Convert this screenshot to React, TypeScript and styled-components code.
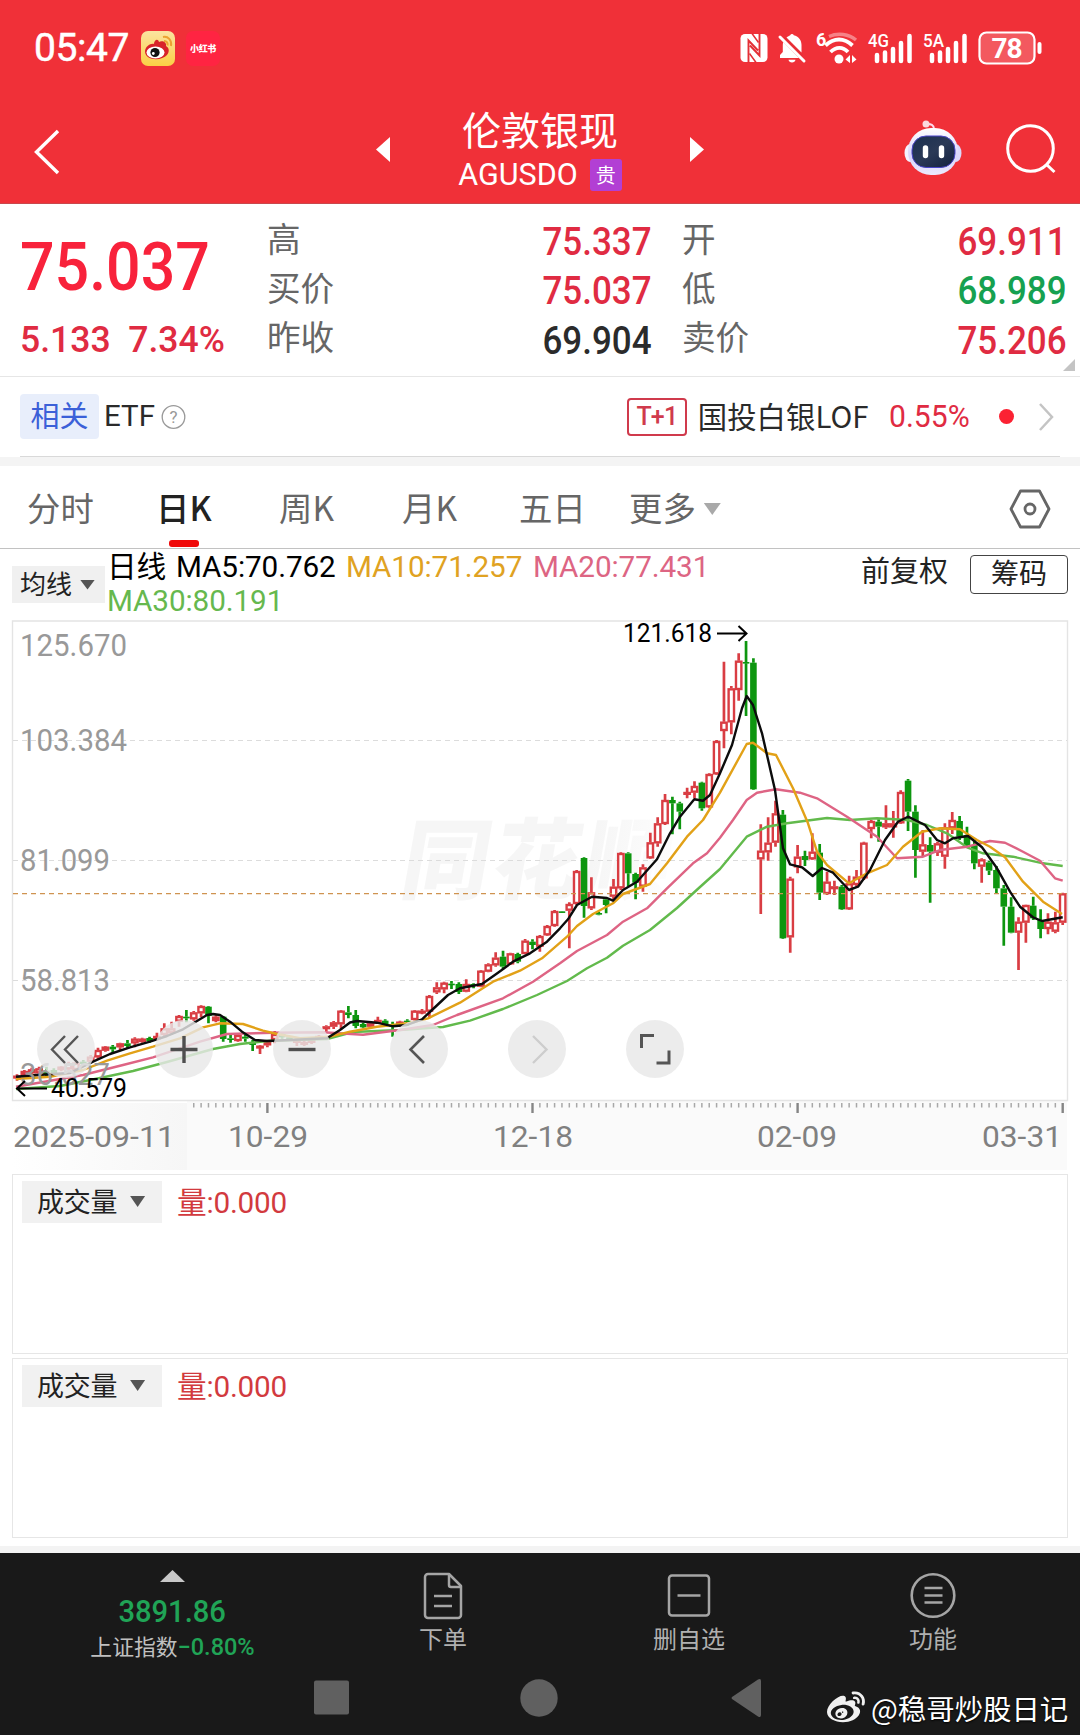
import React from "react";
import styled, { createGlobalStyle } from "styled-components";
import { FaWeibo } from "react-icons/fa";

const NUM = `Roboto, "Noto Sans CJK SC", sans-serif`;
const CJK = `"Noto Sans CJK SC", Roboto, sans-serif`;

const GlobalStyle = createGlobalStyle`
  * { box-sizing: border-box; }
  html, body { margin: 0; padding: 0; background: #fff; }
  body { font-family: ${CJK}; }
  svg { display: block; flex: none; overflow: visible; }
`;

const Screen = styled.main`
  width: 1080px;
  height: 1735px;
  overflow: hidden;
  display: flex;
  flex-direction: column;
  background: #fff;
`;

/* shared text */
const Num = styled.span<{
  $size: number;
  $color?: string;
  $weight?: number;
  $sx?: number;
  $origin?: string;
}>`
  display: inline-block;
  font-family: ${NUM};
  font-size: ${(p) => p.$size}px;
  font-weight: ${(p) => p.$weight ?? 400};
  color: ${(p) => p.$color ?? "inherit"};
  line-height: 1;
  white-space: nowrap;
  transform: scaleX(${(p) => p.$sx ?? 1});
  transform-origin: ${(p) => p.$origin ?? "left"} center;
`;

const Triangle = styled.i<{ $dir: "up" | "down"; $w: number; $h: number; $color: string }>`
  flex: none;
  width: ${(p) => p.$w}px;
  height: ${(p) => p.$h}px;
  background: ${(p) => p.$color};
  clip-path: ${(p) =>
    p.$dir === "up" ? "polygon(50% 0, 100% 100%, 0 100%)" : "polygon(0 0, 100% 0, 50% 100%)"};
`;

/* header */
const Header = styled.header`
  height: 204px;
  flex: none;
  background: #f03038;
  border-bottom: 1px solid #c9474c;
  color: #fff;
`;

const StatusBar = styled.div`
  height: 96px;
  padding: 0 38px 0 34px;
  display: flex;
  align-items: center;
  justify-content: space-between;
`;

const StatusGroup = styled.div<{ $gap?: number }>`
  display: flex;
  align-items: center;
  gap: ${(p) => p.$gap ?? 0}px;
`;

const Clock = styled.div`
  width: 107px;
  font: 400 39px/1 ${NUM};
  letter-spacing: -0.4px;
  -webkit-text-stroke: 0.5px #fff;
`;

const WeiboApp = styled.div`
  width: 34px;
  height: 35px;
  border-radius: 7px;
  background: linear-gradient(#fbe3a0, #fbd045);
`;

const RedApp = styled.div`
  width: 34px;
  height: 35px;
  margin-left: 11px;
  border-radius: 7px;
  background: #ff2442;
  display: flex;
  align-items: center;
  justify-content: center;
  font: 900 9px/1 ${CJK};
  letter-spacing: -0.4px;
`;

const NavBar = styled.div`
  height: 107px;
  padding-left: 34px;
  display: flex;
  align-items: flex-start;
`;

const NavSlot = styled.div<{ $w: number; $top: number }>`
  width: ${(p) => p.$w}px;
  padding-top: ${(p) => p.$top}px;
  flex: none;
`;

const TitleBlock = styled.div`
  width: 300px;
  display: flex;
  flex-direction: column;
  align-items: center;
`;

const Title = styled.h1`
  margin: 10px 0 0;
  font: 400 39px/44px ${CJK};
`;

const Code = styled.div`
  height: 34px;
  margin-top: 8px;
  display: flex;
  align-items: center;
  gap: 12px;
  font: 400 30.5px/34px ${NUM};
`;

const Badge = styled.span`
  width: 32px;
  height: 32px;
  border-radius: 3px;
  background: #b23fd4;
  font: 400 20px/31px ${CJK};
  text-align: center;
`;

/* quote */
const Quote = styled.section`
  height: 173px;
  flex: none;
  position: relative;
  display: grid;
  grid-template-columns: 247px 385px 30px 385px;
  padding: 11px 0 0 20px;
  border-bottom: 1px solid #e6e6e6;
`;

const Price = styled.div`
  display: flex;
  flex-direction: column;
`;

const PriceTop = styled.div`
  height: 90px;
  padding-top: 19px;
`;

const PriceSub = styled.div`
  height: 60px;
  display: flex;
  align-items: center;
  padding-top: 9px;
`;

const StatList = styled.dl<{ $col: number }>`
  grid-column: ${(p) => p.$col};
  margin: 0;
`;

const Stat = styled.div`
  height: 49.3px;
  display: flex;
  justify-content: space-between;
  align-items: center;
`;

const StatLabel = styled.dt`
  font: 400 33.6px/49px ${CJK};
  color: #666;
  margin-top: -5px;
`;

const StatValue = styled.dd`
  margin: 5px 0 0;
  line-height: 1;
`;

const Corner = styled.i`
  position: absolute;
  right: 5px;
  bottom: 5px;
  width: 12px;
  height: 12px;
  background: #c4c4c4;
  clip-path: polygon(100% 0, 100% 100%, 0 100%);
`;

/* related ETF */
const Related = styled.section`
  height: 80px;
  flex: none;
  margin: 0 20px;
  border-bottom: 1px solid #d9d9d9;
  display: flex;
  align-items: center;
`;

const RelatedTag = styled.span`
  width: 79px;
  height: 45px;
  border-radius: 4px;
  background: #e8eefb;
  color: #3b60d8;
  font: 400 29px/41px ${CJK};
  text-align: center;
`;

const EtfLabel = styled.span`
  width: 57px;
  margin-left: 5px;
  padding-bottom: 1px;
  font: 400 29.5px/40px ${NUM};
  color: #2a2a2a;
`;

const Spacer = styled.div`
  flex: 1;
`;

const TPlus = styled.span`
  width: 60px;
  height: 38px;
  border: 2px solid #d03a4c;
  border-radius: 4px;
  color: #d03a4c;
  font: 500 25px/34px ${NUM};
  letter-spacing: -0.8px;
  text-align: center;
`;

const FundName = styled.span`
  margin-left: 11px;
  width: 191px;
  padding-bottom: 4px;
  font: 400 29.4px/38px ${CJK};
  color: #2a2a2a;
  white-space: nowrap;
`;

const Dot = styled.i`
  width: 15px;
  height: 15px;
  border-radius: 50%;
  background: #fb2233;
  margin: 0 25px 0 27px;
`;

const Gap = styled.div<{ $h: number; $color?: string }>`
  height: ${(p) => p.$h}px;
  flex: none;
  background: ${(p) => p.$color ?? "transparent"};
`;

/* tabs */
const Tabs = styled.nav`
  height: 83px;
  flex: none;
  padding-left: 27px;
  display: flex;
  border-bottom: 1px solid #c2c2c2;
`;

const Tab = styled.div<{ $w: number; $active?: boolean }>`
  width: ${(p) => p.$w}px;
  display: flex;
  align-items: center;
  gap: 8px;
  font: ${(p) => (p.$active ? 500 : 400)} 33.4px/1 ${CJK};
  color: ${(p) => (p.$active ? "#222" : "#666")};
  position: relative;
  white-space: nowrap;
  &::after {
    content: "";
    display: ${(p) => (p.$active ? "block" : "none")};
    position: absolute;
    left: 13px;
    bottom: 1px;
    width: 30px;
    height: 7px;
    border-radius: 3px;
    background: #f00a0a;
  }
  i, svg {
    margin-top: 4px;
  }
`;

/* legend */
const Legend = styled.section`
  height: 71px;
  flex: none;
  display: flex;
  align-items: flex-start;
  padding-left: 12px;
`;

const AverageButton = styled.button`
  width: 93px;
  height: 37px;
  margin-top: 17px;
  padding: 0 0 3px 8px;
  border: 0;
  background: #f0f0f0;
  display: flex;
  align-items: center;
  gap: 8px;
  font: 400 26px/1 ${CJK};
  color: #222;
  i {
    margin-top: 3px;
  }
`;

const Averages = styled.div`
  width: 756px;
  padding: 1px 0 0 2px;
  display: flex;
  flex-wrap: wrap;
  align-content: flex-start;
  font: 400 29.7px/34px ${NUM};
  letter-spacing: -0.1px;
`;

const Average = styled.span<{ $w: number; $color: string }>`
  width: ${(p) => p.$w}px;
  color: ${(p) => p.$color};
  white-space: nowrap;
`;

const Adjust = styled.span`
  width: 109px;
  font: 400 29px/40px ${CJK};
  color: #222;
`;

const ChipsButton = styled.button`
  width: 98px;
  height: 39px;
  margin-top: 6px;
  padding: 0 0 5px;
  border: 1px solid #444;
  border-radius: 4px;
  background: #fff;
  font: 400 28px/1 ${CJK};
  color: #222;
`;

/* chart */
const ChartArea = styled.section`
  height: 554px;
  flex: none;
  position: relative;
`;

const ChartTools = styled.div`
  position: absolute;
  left: 37px;
  top: 400px;
  display: flex;
  gap: 59.8px;
`;

const ToolButton = styled.button`
  width: 58px;
  height: 58px;
  padding: 0;
  border: 0;
  border-radius: 50%;
  background: rgba(232, 232, 232, 0.82);
`;

const VolumePanel = styled.section`
  height: 180px;
  flex: none;
  margin: 0 12px;
  padding: 6px 0 0 9px;
  border: 1px solid #e6e6e6;
  display: flex;
  align-items: flex-start;
`;

const VolumeButton = styled.button`
  width: 140px;
  height: 42px;
  padding: 0 0 3px 15px;
  border: 0;
  background: #f1f1f1;
  display: flex;
  align-items: center;
  gap: 13px;
  font: 400 27px/1 ${CJK};
  letter-spacing: -0.3px;
  color: #222;
  i {
    margin-top: 2px;
  }
`;

const VolumeValue = styled.span`
  margin-left: 15px;
  padding-top: 1px;
  font: 400 29.7px/42px ${NUM};
  color: #d23a3e;
  letter-spacing: -0.2px;
`;

/* bottom */
const Footer = styled.footer`
  flex: 1;
  background: #191919;
  color: #b0b0b0;
`;

const ActionBar = styled.div`
  height: 114px;
  display: grid;
  grid-template-columns: 345px 196px 296px 192px;
`;

const IndexBox = styled.div`
  display: flex;
  flex-direction: column;
  align-items: center;
  padding-top: 17px;
`;

const IndexName = styled.div`
  display: flex;
  align-items: center;
  margin-top: 3px;
  font: 400 21.8px/32px ${CJK};
  color: #c0c0c0;
  ${Num} {
    margin-top: 3px;
  }
`;

const Action = styled.div`
  display: flex;
  flex-direction: column;
  align-items: center;
  padding-top: 18px;
  font: 400 24px/33px ${CJK};
`;

const SystemBar = styled.div`
  height: 68px;
  display: flex;
  align-items: center;
  padding: 0 9px 0 314px;
`;

const SystemSlot = styled.div<{ $w: number }>`
  width: ${(p) => p.$w}px;
  flex: none;
  padding-bottom: 7px;
`;

const Signature = styled.div`
  display: flex;
  align-items: center;
  gap: 6px;
  padding-top: 13px;
  font: 400 28.4px/40px ${CJK};
  color: #fff;
  white-space: nowrap;
  text-shadow: 0 1px 2px #000;
`;

/* ---------- chart data ---------- */
const STEP = 7.364;
const LAST_X = 1062.7;
const TOP = 620;
const xOf = (k: number) => LAST_X - k * STEP;

/* high, body top, body bottom, low, rising; newest first, thirds of a pixel below `base` */
type Bar = [number, number, number, number, 0 | 1];
const segments: { base: number; start: number; bars: Bar[] }[] = [
  {
    base: 610,
    start: 0,
    bars: [
      [848, 850, 938, 945, 1], [905, 937, 965, 970, 1], [910, 935, 957, 973, 1], [898, 930, 957, 985, 0],
      [860, 887, 925, 930, 0], [884, 885, 938, 998, 1], [922, 935, 968, 1080, 1], [862, 890, 968, 970, 0],
      [825, 835, 890, 1007, 0], [768, 780, 835, 850, 0], [752, 757, 782, 795, 0], [745, 748, 770, 818, 1],
      [690, 705, 760, 778, 0], [650, 675, 705, 710, 0], [618, 633, 680, 690, 0], [606, 630, 655, 672, 1],
      [640, 652, 740, 776, 1], [695, 700, 728, 738, 1], [682, 705, 725, 878, 0], [660, 703, 725, 740, 1],
      [586, 605, 720, 803, 0], [507, 512, 605, 663, 0], [541, 546, 640, 642, 1], [603, 640, 652, 683, 1],
      [586, 640, 652, 657, 1], [628, 635, 650, 695, 0], [630, 633, 657, 685, 1], [695, 698, 805, 810, 1],
      [780, 800, 825, 830, 1], [797, 820, 898, 900, 1], [825, 830, 898, 900, 0], [812, 829, 833, 855, 1],
      [785, 815, 852, 855, 1], [702, 728, 848, 870, 0], [670, 725, 748, 750, 1], [722, 738, 750, 768, 0],
      [705, 740, 772, 790, 1], [800, 806, 982, 1028, 1], [600, 614, 985, 987, 0], [572, 610, 698, 710, 1],
      [622, 698, 727, 752, 1], [643, 722, 748, 912, 1], [145, 158, 538, 540, 0], [93, 156, 160, 318, 0],
      [130, 152, 240, 272, 1], [228, 235, 337, 373, 1], [155, 335, 363, 415, 1], [390, 393, 493, 495, 1],
      [490, 492, 592, 595, 1], [515, 518, 595, 602, 0], [514, 528, 548, 565, 1], [533, 546, 550, 565, 1],
    ],
  },
  {
    base: 780,
    start: 52,
    bars: [
      [65, 70, 95, 148, 0], [50, 60, 70, 163, 0], [42, 60, 132, 135, 1], [112, 130, 190, 200, 1],
      [158, 187, 235, 237, 1], [253, 262, 320, 335, 1], [278, 282, 308, 358, 0], [217, 220, 280, 318, 0],
      [217, 219, 325, 330, 1], [297, 320, 350, 360, 1], [355, 358, 375, 400, 0], [395, 399, 404, 406, 0],
      [292, 337, 385, 390, 1], [232, 234, 378, 413, 0], [270, 273, 372, 375, 1], [367, 372, 392, 505, 1],
      [393, 394, 397, 398, 0], [390, 393, 438, 440, 1], [435, 438, 466, 468, 1], [465, 468, 500, 515, 1],
      [478, 485, 495, 508, 0], [477, 482, 522, 523, 1], [518, 522, 545, 550, 0], [518, 520, 553, 555, 1],
      [512, 530, 560, 568, 0], [517, 533, 556, 560, 1], [550, 553, 575, 577, 1], [570, 572, 620, 622, 1],
      [610, 612, 618, 625, 0], [598, 612, 635, 637, 1], [607, 612, 636, 642, 0], [603, 611, 615, 627, 0],
      [605, 608, 628, 640, 1], [607, 622, 637, 642, 1], [645, 648, 695, 715, 1], [687, 692, 697, 703, 1],
      [690, 692, 720, 722, 1], [718, 722, 726, 738, 0], [722, 725, 730, 740, 1], [725, 732, 740, 770, 0],
      [718, 722, 735, 740, 0], [710, 720, 730, 732, 1], [726, 730, 740, 742, 1], [728, 732, 742, 745, 0],
    ],
  },
  {
    base: 960,
    start: 96,
    bars: [
      [150, 165, 198, 205, 0], [138, 157, 165, 175, 0], [150, 152, 193, 208, 1], [183, 187, 200, 207, 1],
      [196, 199, 205, 215, 1], [225, 228, 234, 238, 1], [236, 240, 248, 252, 1], [243, 246, 254, 258, 1],
      [236, 240, 248, 258, 1], [228, 232, 238, 242, 0], [218, 222, 232, 236, 0], [213, 222, 240, 250, 1],
      [243, 246, 256, 262, 1], [255, 257, 263, 282, 1], [240, 248, 255, 273, 0], [223, 230, 236, 245, 0],
      [222, 225, 243, 245, 1], [225, 235, 240, 248, 0], [168, 170, 237, 245, 0], [165, 170, 183, 187, 1],
      [138, 140, 168, 190, 0], [136, 138, 160, 172, 1], [153, 157, 178, 182, 1], [150, 170, 175, 187, 0],
      [165, 168, 185, 200, 1], [185, 205, 220, 225, 1], [190, 205, 225, 230, 1], [218, 228, 238, 242, 1],
      [230, 234, 243, 248, 0], [233, 236, 246, 248, 1], [232, 236, 250, 262, 1], [240, 250, 258, 265, 0],
      [248, 250, 262, 270, 1], [255, 260, 268, 280, 0], [258, 260, 272, 275, 1], [263, 270, 292, 297, 1],
      [285, 290, 305, 310, 1], [300, 305, 312, 316, 0], [305, 308, 330, 335, 1], [305, 310, 328, 332, 1],
      [318, 320, 330, 334, 1], [325, 330, 340, 345, 0], [320, 332, 342, 350, 0], [320, 325, 340, 346, 1],
      [323, 328, 340, 345, 1], [330, 333, 345, 350, 1], [343, 347, 355, 362, 1],
    ],
  },
];

const bars = segments.flatMap((s) =>
  s.bars.map(([h, t, b, l, up], i) => ({
    x: xOf(s.start + i),
    high: s.base + h / 3,
    top: s.base + t / 3,
    bottom: s.base + b / 3,
    low: s.base + l / 3,
    up: up === 1,
  }))
);

const averages: { color: string; points: string }[] = [
  {
    color: "#62ba4c",
    points:
      "16,1089 60,1086 100,1078 133,1071 167,1062 213,1049 240,1044 267,1041 327,1039 353,1032 400,1030 443,1027 470,1020.7 503,1009 537,995 567,981 587,968.3 607,957.7 623,945.7 650,930 677,908 700,887 720,869 746.7,836.7 767,826.7 787,823.3 827,818 850,820 877,818.3 907,820 927,825 947,833.3 967,847.3 983,853.3 1013,856.7 1043,863.3 1062.7,866",
  },
  {
    color: "#de6484",
    points:
      "16,1086.7 83,1075 123,1065 153,1057.3 200,1041.7 227,1034 273,1032.7 323,1032.3 363,1034.7 400,1030 433,1025 457,1015 503,998.3 533,981.7 560,963.3 577,951 607,935 623,921.7 647,908.3 667,888.3 693,863.3 707,853.3 720,837.7 733,820 746.7,800 757,792.7 776,789.3 800,792.7 817,798.3 847,816.7 877,836.7 897,858.3 923,856.7 940,850 967,846.7 990,841 1005,842.7 1023,851.7 1040,860.7 1055,878.3 1062.7,880.7",
  },
  {
    color: "#e2a117",
    points:
      "16,1079 50,1076.7 83,1070 107,1060.7 130,1053.3 153,1046.7 180,1038.3 203,1027.3 220,1023.3 243,1024 263,1030.7 277,1034 300,1038.3 330,1036.7 350,1031.7 377,1026.7 410,1023 428,1018.3 460,1002.7 493,981.7 520,970.7 542,958.3 567,936.7 577,926 593,914 613,903.3 623,894 650,884 667,863.3 687,836.7 703,820 720,792.7 746.7,744 753,742.7 767,753.3 776,755 793,788.3 808,823.3 817,851.7 827,865 849,883.3 867,873.3 887,865 903,846.7 922,831.7 940,828.3 960,829.3 977,840 990,846.7 1005,857.3 1023,881.7 1043,901.7 1062,914",
  },
  {
    color: "#0c0c0c",
    points:
      "16,1076.7 37,1075 70,1073 93,1061.7 110,1054 130,1047.3 150,1041.7 167,1036 183,1029.3 197,1021 207,1015 213,1014 220,1015 230,1021.7 242,1031.7 255,1040 267,1041 290,1040 327,1038.3 340,1030 350,1022.5 357,1021 377,1022.7 393,1026.3 407,1025 422,1019.3 432,1010 448,995 460,988.3 482,984 498,972.7 513,961.7 530,953.3 547,941.7 560,928.3 568,919.3 577,905 592,896.7 607,898 613,900.7 623,890 637,881.7 657,859.3 670,833.3 680,816.7 694.3,799.3 703,800.7 710,795 720,773.3 732,745 742,708.3 746.7,696 753,705 762,733.3 775,790 783,848.3 790,864.3 802,867.3 812.7,876 822,868 833,872.7 849,890 858,886.7 870,870 885,840 898,821.7 908,816.7 925,825 937,840 945,843.3 953,838.3 968,836 982,847.3 997,868.3 1010,891.7 1020,906.7 1033,917.3 1042,921 1062.7,917.3",
  },
];

const priceLabels: [string, number, number][] = [
  ["125.670", 655.5, 105],
  ["103.384", 751, 105],
  ["81.099", 871, 88],
  ["58.813", 991, 88],
  ["36.527", 1085, 88],
];

const dateLabels: [string, number, number][] = [
  ["2025-09-11", 13, 162],
  ["10-29", 228, 80],
  ["12-18", 493, 80],
  ["02-09", 757, 80],
  ["03-31", 982, 80],
];

function Candles() {
  return (
    <g strokeWidth="2.4">
      {bars.map((b, i) => {
        const c = b.up ? "#d93d43" : "#0d960f";
        const h = Math.max(b.bottom - b.top, 1.6);
        return (
          <g key={i} stroke={c}>
            <path d={`M${b.x} ${b.high}V${b.top}M${b.x} ${b.bottom}V${b.low}`} strokeWidth="2.7" />
            {b.up ? (
              <rect
                x={b.x - 2.7}
                y={b.top + 1}
                width={5.4}
                height={Math.max(h - 2, 0.8)}
                fill="#fff"
              />
            ) : (
              <rect x={b.x - 3.3} y={b.top} width={6.6} height={h} fill={c} stroke="none" />
            )}
          </g>
        );
      })}
    </g>
  );
}

function Chart() {
  const ticks = Array.from({ length: 119 }, (_, k) => k);
  return (
    <svg width="1080" height="554" viewBox={`0 ${TOP} 1080 554`} fontFamily="Roboto, sans-serif">
      <defs>
        <linearGradient id="axisFade">
          <stop offset="0" stopColor="#fff" />
          <stop offset="1" stopColor="#f6f6f6" />
        </linearGradient>
        <linearGradient id="markFade">
          <stop offset="0.7" stopColor="#f6f6f6" />
          <stop offset="1" stopColor="#fdfdfd" />
        </linearGradient>
      </defs>
      <rect x="12" y="1103" width="175" height="67" fill="url(#axisFade)" />
      <rect x="187" y="1101" width="880" height="69" fill="#fafafa" />
      <path d="M12.5 1100.5V621H1067.5V1100.5Z" fill="none" stroke="#e4e4e4" strokeWidth="1.4" />
      <text
        x="403"
        y="892"
        fontFamily="Noto Sans CJK SC, sans-serif"
        fontWeight="900"
        fontSize="88"
        fill="url(#markFade)"
        textLength="270"
        transform="translate(152 0) skewX(-10)"
      >
        同花顺
      </text>
      <path
        d="M13 740.5H1067M13 860.5H1067M13 980.5H1067"
        stroke="#dcdcdc"
        strokeWidth="1.2"
        strokeDasharray="5 4"
      />
      <Candles />
      <path d="M13 893.6H1067" stroke="#cf9350" strokeWidth="1.3" strokeDasharray="5 4" />
      {averages.map((a) => (
        <polyline
          key={a.color}
          points={a.points}
          fill="none"
          stroke={a.color}
          strokeWidth="2.4"
          strokeLinejoin="round"
        />
      ))}
      <g fill="#999" fontSize="30.5">
        {priceLabels.map(([t, y, w]) => (
          <text key={t} x="20" y={y} textLength={w + 2} lengthAdjust="spacingAndGlyphs">
            {t}
          </text>
        ))}
      </g>
      <g fill="#000" fontSize="25.5">
        <text x="623" y="641.5" textLength="89" lengthAdjust="spacingAndGlyphs">
          121.618
        </text>
        <text x="51" y="1096.5" textLength="76" lengthAdjust="spacingAndGlyphs">
          40.579
        </text>
      </g>
      <path
        d="M717 633.5H746M738.500 626L746.500 633.500L738.500 641M47 1088.500H17M25 1081L17 1088.500L25 1096"
        fill="none"
        stroke="#000"
        strokeWidth="2"
      />
      {ticks.map((k) => {
        const major = k % 36 === 0;
        return (
          <path
            key={k}
            d={`M${xOf(k)} 1103V${major ? 1113 : 1107.5}`}
            stroke={major ? "#858585" : "#a8a8a8"}
            strokeWidth={major ? 2.4 : 1.5}
          />
        );
      })}
      <g fill="#808080" fontSize="30">
        {dateLabels.map(([t, x, w]) => (
          <text key={t} x={x} y="1147" textLength={w} lengthAdjust="spacingAndGlyphs">
            {t}
          </text>
        ))}
      </g>
    </svg>
  );
}

const toolPaths: { d: string; color: string; w: number }[] = [
  { d: "M28 16L15 29.500L28 43M41 16L28 29.500L41 43", color: "#555", w: 2.4 },
  { d: "M15.500 29.500H42.500M29 16V43", color: "#4f4f4f", w: 3.4 },
  { d: "M15.500 29.500H42.500", color: "#4f4f4f", w: 3.4 },
  { d: "M34 16L20.500 29.500L34 43", color: "#555", w: 2.6 },
  { d: "M25 16L38.500 29.500L25 43", color: "#cdcdcd", w: 2.4 },
  { d: "M28 15.500H15.500V28M30.500 43H43V30.500", color: "#555", w: 3 },
];

/* ---------- icons ---------- */
const WeiboColor = () => (
  <svg width="34" height="35" viewBox="0 0 34 35">
    <path d="M4 21c0-6 6-9 9-8 0-4 4-6 5-2 3-2 8 0 7 4 4 2 3 7 1 9-5 6-21 6-22-3z" fill="#d8222a" />
    <ellipse cx="14.500" cy="21.500" rx="9" ry="6" fill="#fff" />
    <circle cx="14" cy="21.500" r="4.600" fill="#111" />
    <circle cx="12.300" cy="22.500" r="1.400" fill="#fff" />
    <path d="M22 6c5-1 9 3 8 9M23 10c3 0 4 2 3.500 4.500" fill="none" stroke="#eca232" strokeWidth="2" />
  </svg>
);

const Nfc = () => (
  <svg width="28" height="30" viewBox="0 0 28 30">
    <rect x="0.500" y="1" width="27" height="28" rx="4.500" fill="#fff" />
    <path
      d="M8.500 30V7.500L18 17.500M19.500 0V22.500L10 12.500"
      fill="none"
      stroke="#e42f36"
      strokeWidth="1.900"
    />
    <path d="M9.500 20.500L16 29.500M12 0.500L18.500 9.500" stroke="#e42f36" strokeWidth="1.500" />
  </svg>
);

const BellOff = () => (
  <svg width="28" height="30" viewBox="0 0 28 30">
    <path
      fill="#fff"
      d="M2 25V22l2.800-3v-7c0-1.200.2-2 .5-3L21 25zM8.500 4.500C10 3.200 11 2.800 12.200 2.200a2 2 0 0 1 3.600 0C20.500 3.200 23.500 7 23.500 12v7.500zM10.500 26.800h7a3.600 3.600 0 0 1-7 0z"
    />
    <path d="M2 4L26 28" stroke="#fff" strokeWidth="3" strokeLinecap="round" />
    <path d="M6.500 4.500L24.500 22.500" stroke="#e42f36" strokeWidth="1.600" />
  </svg>
);

const Wifi = () => (
  <svg width="42" height="34" viewBox="0 0 42 34" fill="none" stroke="#fff">
    <text x="0" y="15" fontSize="18" fontWeight="700" fontFamily="Roboto, sans-serif" fill="#fff" stroke="none">
      6
    </text>
    <path d="M13 5.500C22 1.500 33 3 40 9" strokeWidth="3.400" opacity="0.4" />
    <path d="M9.500 14.500C18 6.500 28 6.500 36.500 14.500" strokeWidth="3.800" />
    <path d="M14.500 21C20 15.500 27 15.500 32 21" strokeWidth="3.800" />
    <circle cx="23" cy="28" r="4.500" fill="#fff" stroke="none" />
    <path fill="#fff" stroke="none" d="M34 24v8L29.500 28.500zM36 24v8L40.500 28.500z" />
  </svg>
);

const Signal = ({ label }: { label: string }) => (
  <svg width="45" height="31" viewBox="0 0 45 31">
    <text
      x="0"
      y="14"
      fontSize="18.500"
      fontWeight="500"
      fontFamily="Roboto, sans-serif"
      fill="#fff"
      textLength="21"
      lengthAdjust="spacingAndGlyphs"
    >
      {label}
    </text>
    <path
      d="M9 22V28M17 19.500V28M25 16V28M33 10V28M41.500 3V28"
      stroke="#fff"
      strokeWidth="4.500"
      strokeLinecap="round"
    />
  </svg>
);

const Battery = () => (
  <svg width="64" height="34" viewBox="0 0 64 34">
    <rect x="1.500" y="1.500" width="55" height="31" rx="7" fill="#fff" fillOpacity="0.2" stroke="#fff" strokeWidth="2.200" />
    <path d="M61.500 13V21" stroke="#fff" strokeWidth="4" strokeLinecap="round" />
    <text x="13.500" y="26.500" fontFamily="Roboto, sans-serif" fontWeight="700" fontSize="28" fill="#fff" textLength="31">
      78
    </text>
  </svg>
);

const Robot = () => (
  <svg width="58" height="58" viewBox="0 0 58 58">
    <defs>
      <linearGradient id="shell" x1="0" y1="0" x2="0" y2="1">
        <stop offset="0" stopColor="#fff" />
        <stop offset="0.6" stopColor="#d9d4fb" />
        <stop offset="1" stopColor="#eceafe" />
      </linearGradient>
      <linearGradient id="visor" x1="0" y1="0" x2="1" y2="1">
        <stop offset="0" stopColor="#1b3050" />
        <stop offset="0.5" stopColor="#2b3956" />
        <stop offset="1" stopColor="#13203f" />
      </linearGradient>
    </defs>
    <path d="M22 5C27 4.500 30 6 30 10" fill="none" stroke="#fde" strokeWidth="2" />
    <circle cx="22" cy="5" r="3.500" fill="#fbd9df" />
    <ellipse cx="6" cy="34" rx="5.500" ry="9" fill="#f4f3ff" />
    <ellipse cx="52" cy="34" rx="5.500" ry="9" fill="#dcd8fb" />
    <rect x="4" y="9" width="50" height="47" rx="23" fill="url(#shell)" />
    <rect x="8" y="17" width="43" height="31.500" rx="14" fill="url(#visor)" stroke="#4a45c8" strokeWidth="1" />
    <path d="M21.500 29V36.500M37.500 29V36.500" stroke="#fff" strokeWidth="5.400" strokeLinecap="round" />
  </svg>
);

/* ---------- page ---------- */
const RED = "#e02b42";
const stats: { label: string; value: string; color: string }[][] = [
  [
    { label: "高", value: "75.337", color: RED },
    { label: "买价", value: "75.037", color: RED },
    { label: "昨收", value: "69.904", color: "#2b2b2b" },
  ],
  [
    { label: "开", value: "69.911", color: RED },
    { label: "低", value: "68.989", color: "#16a150" },
    { label: "卖价", value: "75.206", color: RED },
  ],
];

const tabs: { name: string; w: number; active?: boolean; more?: boolean }[] = [
  { name: "分时", w: 129 },
  { name: "日K", w: 123, active: true },
  { name: "周K", w: 123 },
  { name: "月K", w: 117 },
  { name: "五日", w: 110 },
  { name: "更多", w: 380, more: true },
];

export default function App() {
  return (
    <>
      <GlobalStyle />
      <Screen>
        <Header>
          <StatusBar>
            <StatusGroup>
              <Clock>05:47</Clock>
              <WeiboApp>
                <WeiboColor />
              </WeiboApp>
              <RedApp>小红书</RedApp>
            </StatusGroup>
            <StatusGroup $gap={10}>
              <Nfc />
              <BellOff />
              <Wifi />
              <Signal label="4G" />
              <Signal label="5A" />
              <Battery />
            </StatusGroup>
          </StatusBar>
          <NavBar>
            <NavSlot $w={342} $top={33}>
              <svg width="26" height="46" viewBox="0 0 26 46">
                <path d="M24 2L2.500 23L24 44" fill="none" stroke="#fff" strokeWidth="3.400" />
              </svg>
            </NavSlot>
            <NavSlot $w={14} $top={41}>
              <svg width="14" height="25" viewBox="0 0 14 25">
                <path d="M14 0V25L0 12.500Z" fill="#fff" />
              </svg>
            </NavSlot>
            <TitleBlock>
              <Title>伦敦银现</Title>
              <Code>
                AGUSDO<Badge>贵</Badge>
              </Code>
            </TitleBlock>
            <NavSlot $w={214} $top={41}>
              <svg width="14" height="25" viewBox="0 0 14 25">
                <path d="M0 0V25L14 12.500Z" fill="#fff" />
              </svg>
            </NavSlot>
            <NavSlot $w={101} $top={23}>
              <Robot />
            </NavSlot>
            <NavSlot $w={54} $top={27}>
              <svg width="54" height="52" viewBox="0 0 54 52" fill="none" stroke="#fff" strokeWidth="3">
                <circle cx="25.500" cy="25.500" r="22.800" />
                <path d="M41.500 41.500L49.500 49" />
              </svg>
            </NavSlot>
          </NavBar>
        </Header>

        <Quote>
          <Price>
            <PriceTop>
              <Num $size={66.5} $weight={500} $color="#f8223b" $sx={0.915}>
                75.037
              </Num>
            </PriceTop>
            <PriceSub>
              <Num $size={37} $weight={500} $color={RED} $sx={0.96}>
                5.133&nbsp;&nbsp;7.34%
              </Num>
            </PriceSub>
          </Price>
          {stats.map((col, i) => (
            <StatList key={i} $col={i === 0 ? 2 : 4}>
              {col.map((s) => (
                <Stat key={s.label}>
                  <StatLabel>{s.label}</StatLabel>
                  <StatValue>
                    <Num $size={38} $weight={500} $color={s.color} $sx={0.92} $origin="right">
                      {s.value}
                    </Num>
                  </StatValue>
                </Stat>
              ))}
            </StatList>
          ))}
          <Corner />
        </Quote>

        <Related>
          <RelatedTag>相关</RelatedTag>
          <EtfLabel>ETF</EtfLabel>
          <svg width="26" height="26" viewBox="0 0 26 26">
            <circle cx="12.500" cy="13" r="11.300" fill="none" stroke="#999" strokeWidth="1.300" />
            <text x="12.500" y="19" textAnchor="middle" fontSize="17" fontFamily="Roboto, sans-serif" fill="#999">
              ?
            </text>
          </svg>
          <Spacer />
          <TPlus>T+1</TPlus>
          <FundName>国投白银LOF</FundName>
          <Num $size={31} $color={RED} $sx={0.97}>
            0.55%
          </Num>
          <Dot />
          <svg width="21" height="30" viewBox="0 0 21 30">
            <path d="M1 2L13 15L1 28" fill="none" stroke="#c4c4c4" strokeWidth="2.500" />
          </svg>
        </Related>
        <Gap $h={9} $color="#f4f4f4" />

        <Tabs>
          {tabs.map((t) => (
            <Tab key={t.name} $w={t.w} $active={t.active}>
              {t.name}
              {t.more && <Triangle $dir="down" $w={17} $h={12} $color="#a9a9a9" />}
            </Tab>
          ))}
          <Tab $w={44}>
            <svg width="42" height="40" viewBox="0 0 42 40" fill="none" stroke="#666" strokeWidth="2.800">
              <path d="M11.500 2H30.500L40 20L30.500 38H11.500L2 20Z" strokeLinejoin="round" />
              <circle cx="21" cy="20" r="5" />
            </svg>
          </Tab>
        </Tabs>

        <Legend>
          <AverageButton>
            均线
            <Triangle $dir="down" $w={15} $h={10} $color="#555" />
          </AverageButton>
          <Averages>
            <Average $w={69} $color="#000">
              日线
            </Average>
            <Average $w={170} $color="#000">
              MA5:70.762
            </Average>
            <Average $w={187} $color="#e0a222">
              MA10:71.257
            </Average>
            <Average $w={300} $color="#dd6583">
              MA20:77.431
            </Average>
            <Average $w={200} $color="#66b84e">
              MA30:80.191
            </Average>
          </Averages>
          <Adjust>前复权</Adjust>
          <ChipsButton>筹码</ChipsButton>
        </Legend>

        <ChartArea>
          <Chart />
          <ChartTools>
            {toolPaths.map((t, i) => (
              <ToolButton key={i}>
                <svg width="58" height="58" viewBox="0 0 58 58">
                  <path d={t.d} fill="none" stroke={t.color} strokeWidth={t.w} />
                </svg>
              </ToolButton>
            ))}
          </ChartTools>
        </ChartArea>

        {[0, 1].map((i) => (
          <React.Fragment key={i}>
            <VolumePanel>
              <VolumeButton>
                成交量
                <Triangle $dir="down" $w={15} $h={11} $color="#555" />
              </VolumeButton>
              <VolumeValue>量:0.000</VolumeValue>
            </VolumePanel>
            <Gap $h={i === 0 ? 4 : 8} />
          </React.Fragment>
        ))}
        <Gap $h={7} $color="#f3f3f3" />

        <Footer>
          <ActionBar>
            <IndexBox>
              <Triangle $dir="up" $w={25} $h={12} $color="#c8c8c8" />
              <Gap $h={14} />
              <Num $size={31} $weight={500} $color="#20a456" $sx={0.94} $origin="center">
                3891.86
              </Num>
              <IndexName>
                上证指数
                <Num $size={23.5} $weight={500} $color="#20a456">
                  −0.80%
                </Num>
              </IndexName>
            </IndexBox>
            <Action>
              <svg width="44" height="50" viewBox="0 0 44 50" fill="none" stroke="#a5a5a5" strokeWidth="2.500">
                <path d="M7 3H28L40 15V44a3 3 0 0 1-3 3H7a3 3 0 0 1-3-3V6a3 3 0 0 1 3-3Z" strokeLinejoin="round" />
                <path d="M28 3V14a2 2 0 0 0 2 2H40M13 25H31M13 35H31" />
              </svg>
              下单
            </Action>
            <Action>
              <svg width="44" height="50" viewBox="0 0 44 50" fill="none" stroke="#a5a5a5" strokeWidth="2.500">
                <rect x="2" y="4.500" width="40" height="40" rx="3" />
                <path d="M10.500 24.500H33.500" />
              </svg>
              删自选
            </Action>
            <Action>
              <svg width="46" height="50" viewBox="0 0 46 50" fill="none" stroke="#a5a5a5" strokeWidth="2.600">
                <circle cx="23" cy="24.500" r="21.300" />
                <path d="M14.500 17H32.500M14.500 24.500H32.500M14.500 31.500H32.500" />
              </svg>
              功能
            </Action>
          </ActionBar>
          <SystemBar>
            <SystemSlot $w={206}>
              <svg width="35" height="35" viewBox="0 0 35 35">
                <rect width="35" height="34" y="0.500" rx="2" fill="#606060" />
              </svg>
            </SystemSlot>
            <SystemSlot $w={211}>
              <svg width="38" height="38" viewBox="0 0 38 38">
                <circle cx="19" cy="19" r="18.700" fill="#606060" />
              </svg>
            </SystemSlot>
            <SystemSlot $w={96}>
              <svg width="31" height="40" viewBox="0 0 31 40">
                <path d="M1 19L27 1.500Q30 0 30 3V37Q30 40 27 38.500L1 21Q0 20 1 19Z" fill="#606060" />
              </svg>
            </SystemSlot>
            <Signature>
              <FaWeibo size={38} color="#f0f0f0" />
              @稳哥炒股日记
            </Signature>
          </SystemBar>
        </Footer>
      </Screen>
    </>
  );
}
